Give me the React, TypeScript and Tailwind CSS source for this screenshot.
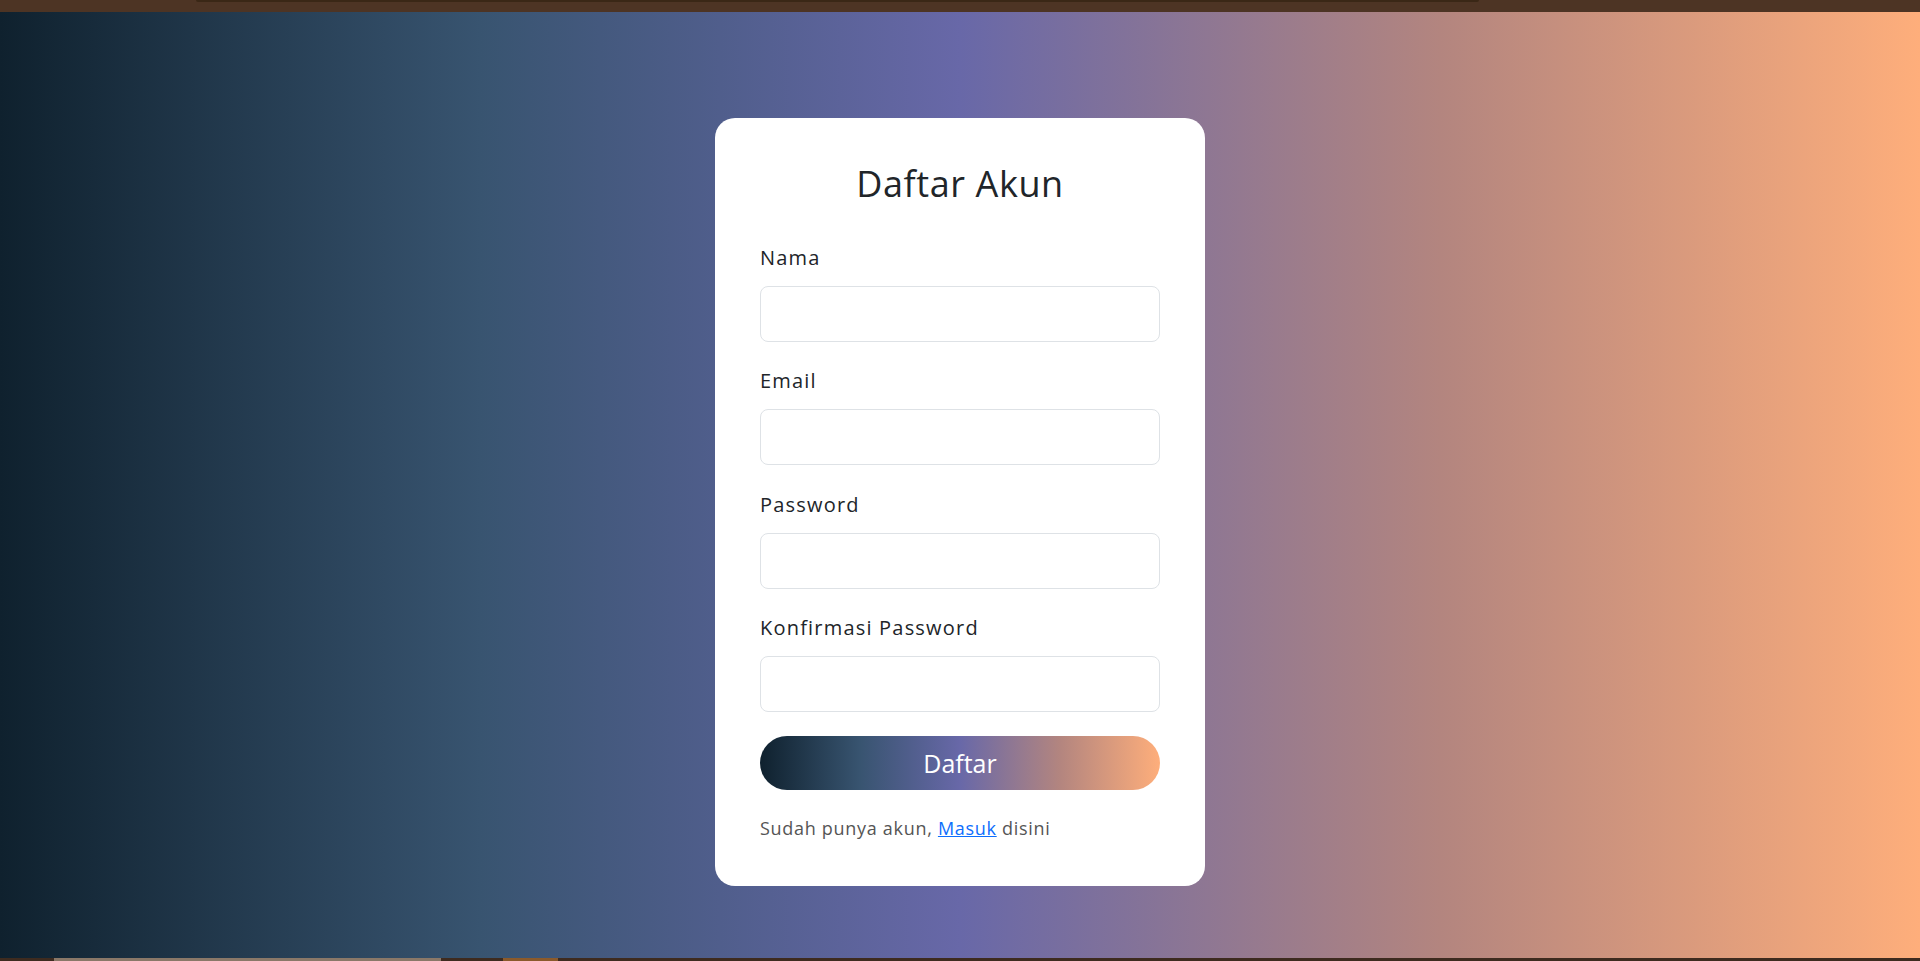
import { FormEvent } from "react";

const fields = [
  { id: "nama", label: "Nama", type: "text" },
  { id: "email", label: "Email", type: "email" },
  { id: "password", label: "Password", type: "password" },
  { id: "konfirmasi", label: "Konfirmasi Password", type: "password" },
];

const gradient =
  "bg-[linear-gradient(90deg,#0f212e_0%,#385470_25%,#6868a8_50%,#b3857f_75%,#feae7b_100%)]";

export default function App() {
  const onSubmit = (e: FormEvent) => e.preventDefault();

  return (
    <div className="h-screen flex flex-col overflow-hidden font-['Open_Sans',sans-serif]">
      {/* window chrome strip */}
      <div className="h-[12px] shrink-0 bg-[#4d3424] relative">
        <div className="absolute left-[196px] right-[441px] top-0 h-[2px] rounded-b bg-[#3a2716]" />
      </div>

      <main className={`flex-1 flex justify-center pt-[106px] ${gradient}`}>
        <div className="w-[490px] self-start rounded-[20px] bg-white px-[45px] pt-[44px] pb-[46px]">
          <h1 className="text-center text-[36px] leading-[44px] tracking-[0.6px] text-[#212529] mb-[40px]">
            Daftar Akun
          </h1>

          <form onSubmit={onSubmit}>
            {fields.map((f, i) => (
              <div key={f.id} className={i === fields.length - 1 ? "mb-[24px]" : "mb-[27.33px]"}>
                <label
                  htmlFor={f.id}
                  className="block text-[20px] leading-[24px] tracking-[1.2px] text-[#212529] mb-[16px]"
                >
                  {f.label}
                </label>
                <input
                  id={f.id}
                  type={f.type}
                  className="block w-full h-[56px] rounded-[8px] border border-[#dee2e6] bg-white px-[15px] text-[20px] outline-none"
                />
              </div>
            ))}

            <button
              type="submit"
              className={`w-full h-[54px] rounded-full flex items-center justify-center text-white text-[25px] leading-[30px] ${gradient}`}
            >
              Daftar
            </button>
          </form>

          <p className="mt-[26px] text-[18px] leading-[24px] tracking-[0.7px] text-[#555]">
            Sudah punya akun,{" "}
            <a href="#" className="text-[#0d6efd] underline">
              Masuk
            </a>{" "}
            disini
          </p>
        </div>
      </main>

      {/* taskbar strip */}
      <div className="h-[3px] shrink-0 flex bg-[#3e2b1f]">
        <div className="w-[54px]" />
        <div className="w-[387px] bg-[#8a7868]" />
        <div className="w-[62px]" />
        <div className="w-[55px] bg-[#8b5a2b]" />
      </div>
    </div>
  );
}
